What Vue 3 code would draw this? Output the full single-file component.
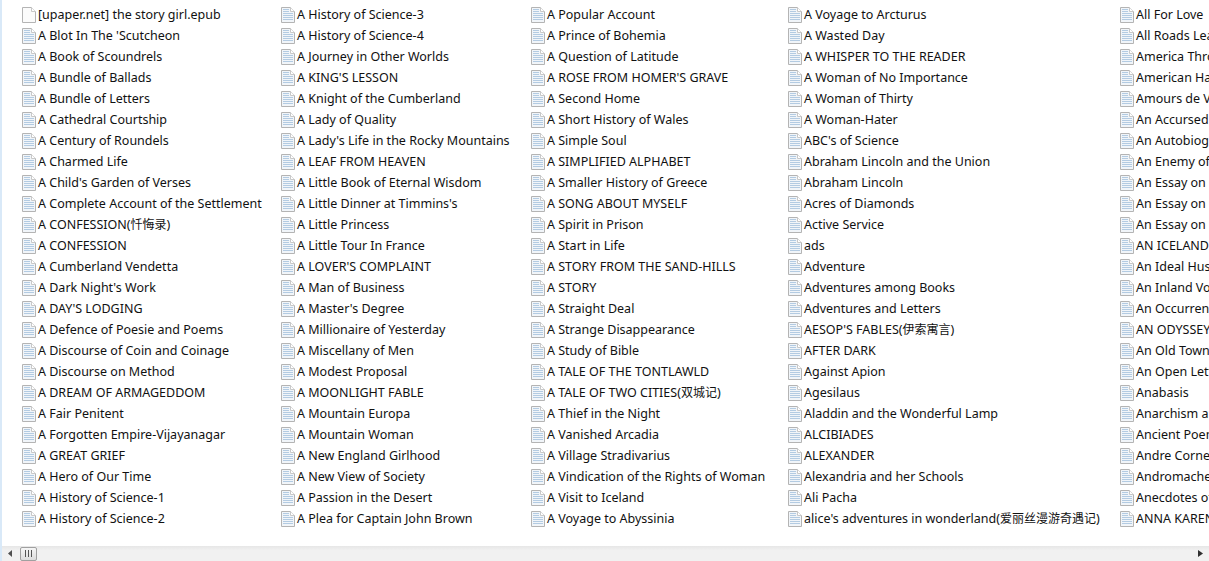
<script setup>
const columns = [
  { width: 259, items: ["[upaper.net] the story girl.epub", "A Blot In The 'Scutcheon", "A Book of Scoundrels", "A Bundle of Ballads", "A Bundle of Letters", "A Cathedral Courtship", "A Century of Roundels", "A Charmed Life", "A Child's Garden of Verses", "A Complete Account of the Settlement", "A CONFESSION(忏悔录)", "A CONFESSION", "A Cumberland Vendetta", "A Dark Night's Work", "A DAY'S LODGING", "A Defence of Poesie and Poems", "A Discourse of Coin and Coinage", "A Discourse on Method", "A DREAM OF ARMAGEDDOM", "A Fair Penitent", "A Forgotten Empire-Vijayanagar", "A GREAT GRIEF", "A Hero of Our Time", "A History of Science-1", "A History of Science-2"] },
  { width: 250, items: ["A History of Science-3", "A History of Science-4", "A Journey in Other Worlds", "A KING'S LESSON", "A Knight of the Cumberland", "A Lady of Quality", "A Lady's Life in the Rocky Mountains", "A LEAF FROM HEAVEN", "A Little Book of Eternal Wisdom", "A Little Dinner at Timmins's", "A Little Princess", "A Little Tour In France", "A LOVER'S COMPLAINT", "A Man of Business", "A Master's Degree", "A Millionaire of Yesterday", "A Miscellany of Men", "A Modest Proposal", "A MOONLIGHT FABLE", "A Mountain Europa", "A Mountain Woman", "A New England Girlhood", "A New View of Society", "A Passion in the Desert", "A Plea for Captain John Brown"] },
  { width: 257, items: ["A Popular Account", "A Prince of Bohemia", "A Question of Latitude", "A ROSE FROM HOMER'S GRAVE", "A Second Home", "A Short History of Wales", "A Simple Soul", "A SIMPLIFIED ALPHABET", "A Smaller History of Greece", "A SONG ABOUT MYSELF", "A Spirit in Prison", "A Start in Life", "A STORY FROM THE SAND-HILLS", "A STORY", "A Straight Deal", "A Strange Disappearance", "A Study of Bible", "A TALE OF THE TONTLAWLD", "A TALE OF TWO CITIES(双城记)", "A Thief in the Night", "A Vanished Arcadia", "A Village Stradivarius", "A Vindication of the Rights of Woman", "A Visit to Iceland", "A Voyage to Abyssinia"] },
  { width: 332, items: ["A Voyage to Arcturus", "A Wasted Day", "A WHISPER TO THE READER", "A Woman of No Importance", "A Woman of Thirty", "A Woman-Hater", "ABC's of Science", "Abraham Lincoln and the Union", "Abraham Lincoln", "Acres of Diamonds", "Active Service", "ads", "Adventure", "Adventures among Books", "Adventures and Letters", "AESOP'S FABLES(伊索寓言)", "AFTER DARK", "Against Apion", "Agesilaus", "Aladdin and the Wonderful Lamp", "ALCIBIADES", "ALEXANDER", "Alexandria and her Schools", "Ali Pacha", "alice's adventures in wonderland(爱丽丝漫游奇遇记)"] },
  { width: 200, items: ["All For Love", "All Roads Lead to Rome", "America Through", "American Hand Book", "Amours de Voyage", "An Accursed Race", "An Autobiography", "An Enemy of the People", "An Essay on Man", "An Essay on Criticism", "An Essay on Comedy", "AN ICELANDIC", "An Ideal Husband", "An Inland Voyage", "An Occurrence", "AN ODYSSEY", "An Old Town", "An Open Letter", "Anabasis", "Anarchism and", "Ancient Poems", "Andre Cornelis", "Andromache", "Anecdotes of", "ANNA KARENINA"] },
];

function isBlank(name) {
  return name.endsWith('.epub');
}

// separa o titulo da parte chinesa, que e um pouco menor
function parts(name) {
  const m = name.match(/^(.*\()([^\x00-\x7f]+)(\))$/);
  return m ? [m[1], m[2], m[3]] : [name, '', ''];
}
</script>

<template>
  <div class="window">
    <div class="listing">
      <ul v-for="col in columns" :key="col.items[0]" class="column" :style="{ width: col.width + 'px' }">
        <li v-for="name in col.items" :key="name" class="file">
          <svg class="icon" width="14" height="16" viewBox="0 0 14 16">
            <path d="M0.5 0.5H9.5L13.5 4.5V15.5H0.5Z" :fill="isBlank(name) ? '#fbfbfb' : '#f1f5f9'" stroke="#b4b4b4" />
            <path d="M9.5 0.5V4.5H13.5" fill="#fff" stroke="#c8c8c8" />
            <path v-if="!isBlank(name)" d="M2 2.5H8M2 4.5H8M2 6.5H12M2 8.5H12M2 10.5H12M2 12.5H12" stroke="#b3cbe2" fill="none" />
          </svg>
          <span class="name">{{ parts(name)[0] }}<span class="cjk">{{ parts(name)[1] }}</span>{{ parts(name)[2] }}</span>
        </li>
      </ul>
    </div>
    <div class="scrollbar">
      <svg class="arrow" width="5" height="7" viewBox="0 0 5 7"><path d="M4 0V7L0 3.5Z" fill="#505050" /></svg>
      <div class="thumb">
        <i></i><i></i><i></i>
      </div>
      <div class="track"></div>
      <svg class="arrow" width="5" height="7" viewBox="0 0 5 7"><path d="M0 0V7L5 3.5Z" fill="#303030" /></svg>
    </div>
  </div>
</template>

<style>
html, body {
  margin: 0;
  overflow: hidden;
  background: #fff;
}
</style>

<style scoped>
.window {
  display: flex;
  flex-direction: column;
  width: 1209px;
  height: 561px;
  overflow: hidden;
  box-sizing: border-box;
  border-left: 2px solid #d9e9f8;
  font-family: "Noto Sans", "Noto Sans CJK SC", sans-serif;
  font-size: 12.5px;
  color: #111;
}

.listing {
  flex: 1;
  display: flex;
  overflow: hidden;
  padding: 4px 0 0 20px;
}

.column {
  flex: none;
  list-style: none;
  margin: 0;
  padding: 0;
}

.file {
  display: flex;
  align-items: center;
  gap: 2px;
  height: 21px;
  line-height: 21px;
  white-space: nowrap;
}

.icon {
  flex: none;
  margin-top: 1px;
}

.cjk {
  font-size: 12px;
  line-height: 1;
}

.scrollbar {
  flex: none;
  display: flex;
  align-items: center;
  height: 15px;
  padding: 0 6px 0 6px;
  background: linear-gradient(#e6e6e6, #f1f1f1 30%, #f1f1f1);
}

.thumb {
  display: flex;
  align-items: center;
  justify-content: center;
  gap: 2px;
  box-sizing: border-box;
  width: 17px;
  height: 14px;
  margin-left: 7px;
  border: 1px solid #a0a0a0;
  border-radius: 2px;
  background: linear-gradient(#f6f6f6, #dcdcdc);
}

.thumb i {
  width: 1px;
  height: 7px;
  background: #555;
}

.track {
  flex: 1;
}
</style>
